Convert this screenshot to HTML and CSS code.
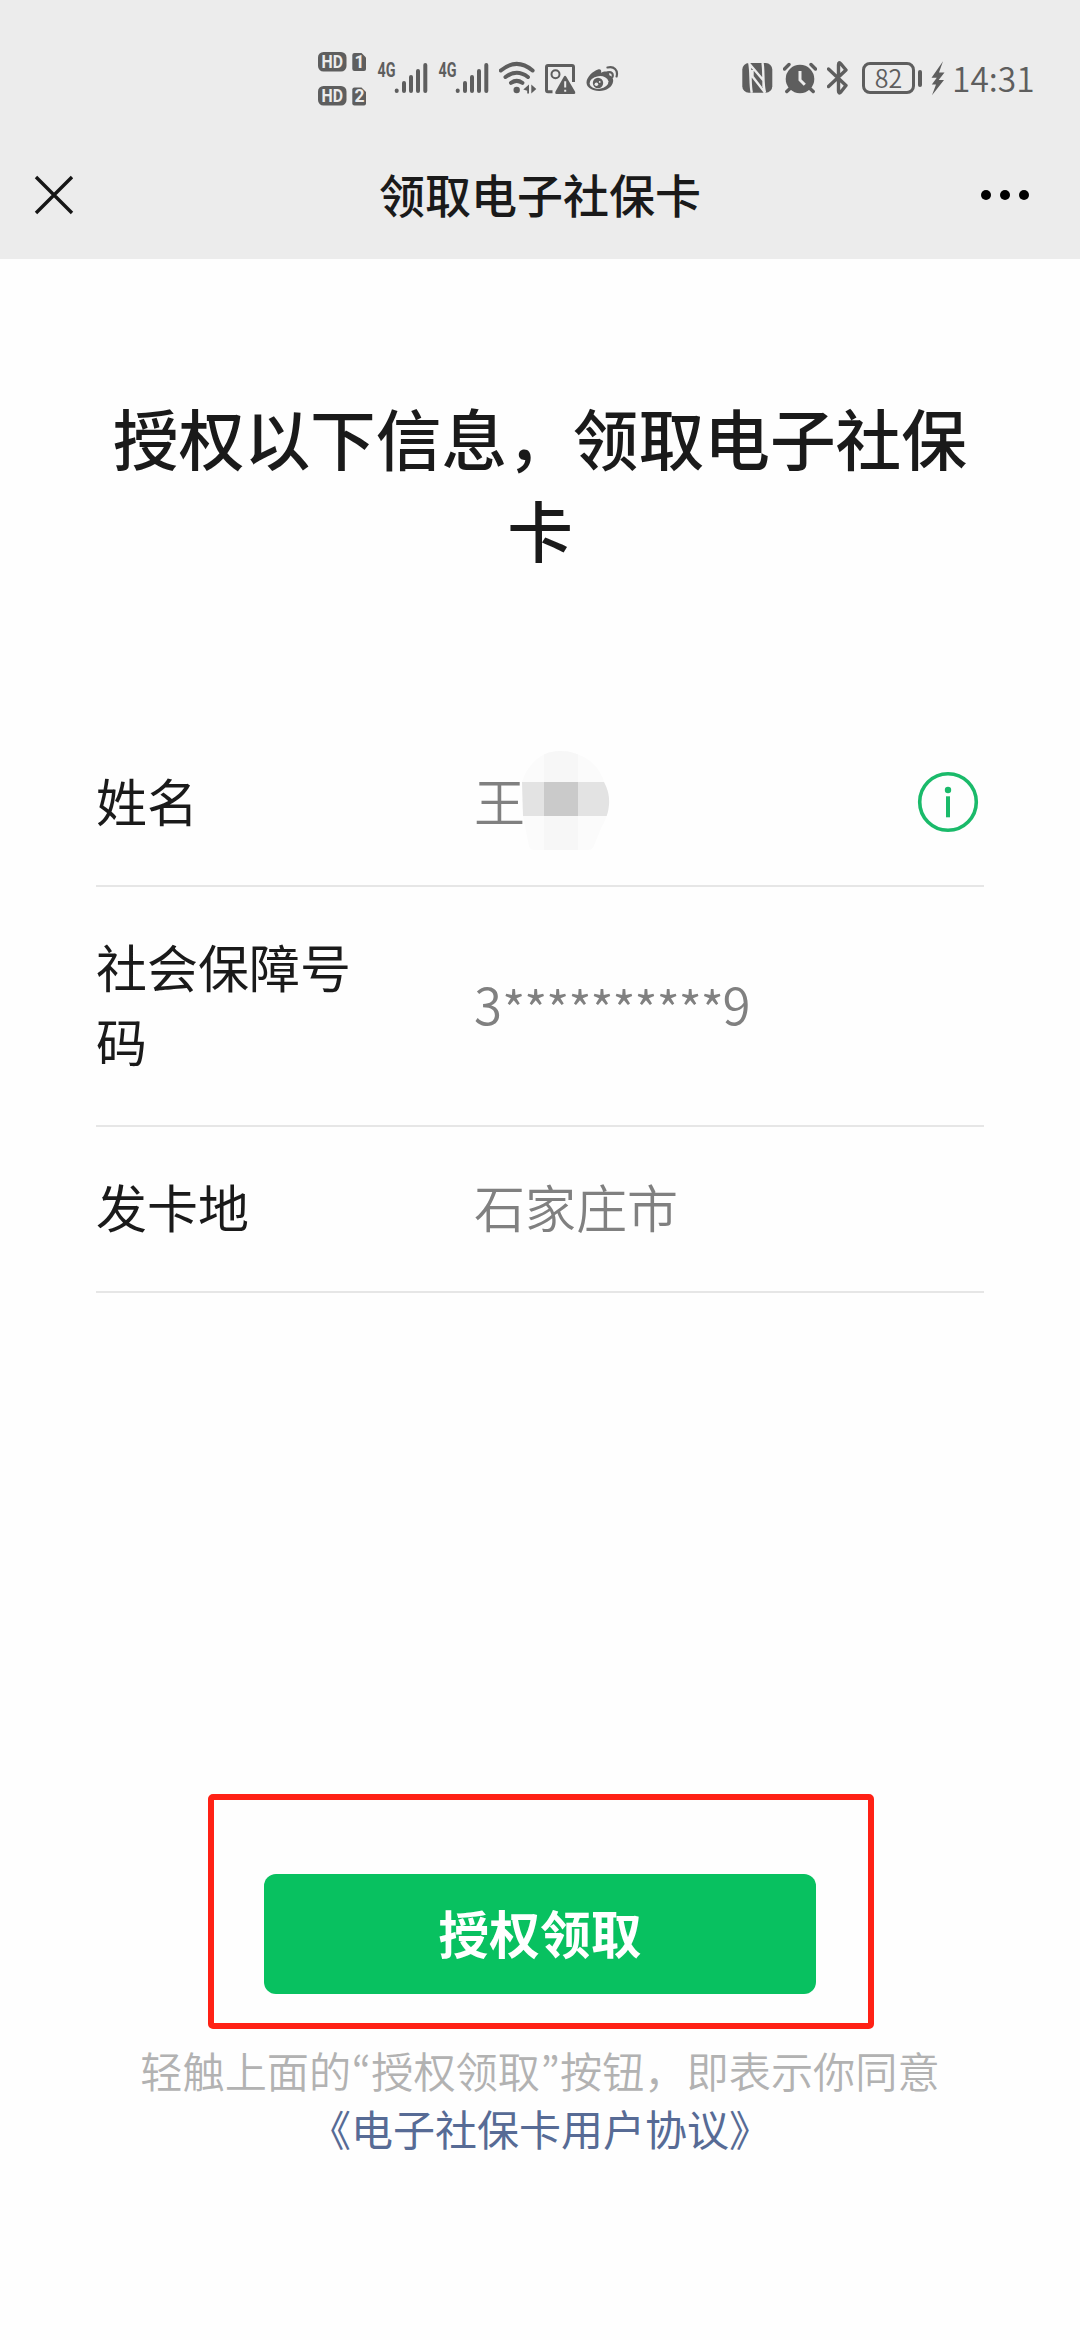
FILE: index.html
```
<!doctype html>
<html lang="zh-CN">
<head>
  <meta charset="UTF-8">
  <meta name="viewport" content="width=device-width, initial-scale=1.0">
  <title>领取电子社保卡</title>
  <link rel="stylesheet" href="styles.css">
</head>
<body>
  <div id="app">
    <div class="top">
      <div class="status">
        <div class="status-left">
          <svg class="icon hd" width="48" height="60" viewBox="0 0 48 60">
            <rect x="0" y="4" width="28.5" height="19.5" rx="5.5"/>
            <rect x="0" y="38" width="28.5" height="19.5" rx="5.5"/>
            <path d="M36.500 5H43.500L48 9.500V21Q48 23 46 23H36.500Q34.300 23 34.300 21V7Q34.300 5 36.500 5Z"/>
            <path d="M36.500 39.500H43.500L48 44V55.500Q48 57.500 46 57.500H36.500Q34.300 57.500 34.300 55.500V41.500Q34.300 39.500 36.500 39.500Z"/>
            <text class="hd-text" x="3.5" y="19.8" textLength="21.500" lengthAdjust="spacingAndGlyphs">HD</text>
            <text class="hd-text" x="3.5" y="53.800" textLength="21.500" lengthAdjust="spacingAndGlyphs">HD</text>
            <text class="hd-text" x="36.500" y="19.8">1</text>
            <text class="hd-text" x="36.500" y="54.300">2</text>
          </svg>
          <svg class="icon signal" width="51" height="60" viewBox="0 0 51 60">
            <text class="net-text" x="0.500" y="28.500" textLength="18" lengthAdjust="spacingAndGlyphs">4G</text>
            <path class="bar" d="M19.700 42.500V43M27 35V43M34 29V43M41 23V43M48.300 17V43"/>
          </svg>
          <svg class="icon signal" width="51" height="60" viewBox="0 0 51 60">
            <text class="net-text" x="0.500" y="28.500" textLength="18" lengthAdjust="spacingAndGlyphs">4G</text>
            <path class="bar" d="M19.700 42.500V43M27 35V43M34 29V43M41 23V43M48.300 17V43"/>
          </svg>
          <svg class="icon wifi" width="38" height="60" viewBox="0 0 38 60">
            <path class="arc" d="M1.800 22.500Q17.700 9.300 33.600 22.500M6.500 29Q17.700 20.600 28.900 29M12 34.800Q17.700 31 23.400 34.800"/>
            <circle cx="17.700" cy="42" r="3.200"/>
            <path d="M30 36.500V45.500H28.200V42.800L24.300 41.600ZM32.300 36.500L37.300 41L32.300 45.500Z"/>
          </svg>
          <svg class="icon image" width="31" height="60" viewBox="0 0 31 60">
            <path class="line" d="M7.500 43.700H3Q1.500 43.700 1.500 42.200V19Q1.500 17.500 3 17.500H27Q28.500 17.500 28.500 19V34"/>
            <circle class="ring" cx="10.500" cy="26.300" r="4"/>
            <path d="M18.800 28.800Q20 26.500 21.300 28.800L30 43.500Q30.800 46 29 46H11.500Q9.700 46 10.500 43.500Z"/>
            <path class="mark" d="M20.200 33.300V39.500M20.200 41.700V43.700"/>
          </svg>
          <svg class="icon weibo" width="33" height="60" viewBox="0 0 33 60">
            <path d="M12 21.500C14.500 20.700 15.800 22.300 15 24.800C18.500 23 23.500 22.500 23.400 27.200C25.500 28 27.500 29.800 27.200 33C26.500 39.500 19.500 43.300 13 43C6 42.700 0.500 39.500 0.500 34.500C0.500 29.500 7 22.800 12 21.500Z"/>
            <ellipse class="hole" cx="13" cy="34.500" rx="9.500" ry="6.300" transform="rotate(-8 13 34.500)"/>
            <circle cx="12" cy="35" r="5.200"/>
            <circle class="hole" cx="10.400" cy="36.300" r="1.800"/>
            <circle class="hole" cx="13.700" cy="33.900" r="0.900"/>
            <path class="wave" d="M21.500 24.300C25.500 23.300 27.500 25.500 26.500 29M21.500 19.500C28 17.800 32.300 22 30.600 28.500"/>
          </svg>
        </div>
        <div class="status-right">
          <svg class="icon nfc" width="31" height="60" viewBox="0 0 31 60">
            <rect x="0.300" y="15" width="30" height="29.700" rx="6.500"/>
            <path class="nfc-line" d="M9.800 44.700C8 38 9 24 7.500 16L21.500 32.500V39M20.500 15C22 22 20.500 36 23 44.700L10.500 28.500V22"/>
          </svg>
          <svg class="icon alarm" width="34" height="60" viewBox="0 0 34 60">
            <circle cx="17" cy="31" r="14.300"/>
            <path class="leg" d="M1.500 21L6 16.500M28 16.500L32.500 21M7 40.500L3.800 43.500M27 40.500L30.200 43.500"/>
            <path class="hands" d="M17 23V32L21.800 36.800"/>
          </svg>
          <svg class="icon bluetooth" width="22" height="60" viewBox="0 0 22 60">
            <path class="line" d="M1.500 21L19 37.500L14 43.800Q11.500 46.500 11.500 43V17Q11.500 13 14 16L19 22L1.500 38.500"/>
          </svg>
          <div class="battery">
            <div class="battery-body">82</div>
            <div class="battery-cap"></div>
          </div>
          <svg class="icon bolt" width="14" height="60" viewBox="0 0 14 60">
            <path d="M12 13.300L0.500 29.700H5.800L0.800 36.500H5L1 47.300L13 32H7.700L13.500 24.500H8Z"/>
          </svg>
          <span class="time">14:31</span>
        </div>
      </div>
      <div class="nav">
        <svg class="close" width="40" height="40" viewBox="0 0 40 40">
          <path d="M2 2L38 38M38 2L2 38"/>
        </svg>
        <div class="nav-title">领取电子社保卡</div>
        <svg class="more" width="50" height="12" viewBox="0 0 50 12">
          <circle cx="6" cy="6" r="5"/>
          <circle cx="25" cy="6" r="5"/>
          <circle cx="44" cy="6" r="5"/>
        </svg>
      </div>
    </div>

    <h1 class="title">授权以下信息，领取电子社保卡</h1>

    <div class="list">
      <div class="row">
        <div class="label">姓名</div>
        <div class="value name">王<svg class="mosaic" width="88" height="100" viewBox="0 0 88 100">
            <clipPath id="blob">
              <path d="M0 31C5 15 18 0 38 0C58 0 77 12 82 31Q88 42 87 54Q86 66 79 77L72 95Q70 99 66 99H12Q8 99 7 95L1 65Z"/>
            </clipPath>
            <g clip-path="url(#blob)">
              <rect width="88" height="100" fill="#fbfbfb"/>
              <rect x="22" width="34" height="100" fill="#f7f7f7"/>
              <rect y="31" width="88" height="34" fill="#e3e3e3"/>
              <rect x="22" y="31" width="34" height="34" fill="#cacaca"/>
            </g>
          </svg></div>
        <svg class="info" width="62" height="62" viewBox="0 0 62 62">
          <circle class="info-ring" cx="31" cy="31" r="28.300"/>
          <circle cx="31" cy="19" r="3.200"/>
          <rect x="29" y="25.300" width="4" height="21"/>
        </svg>
      </div>
      <div class="row">
        <div class="label">社会保障号码</div>
        <div class="value">3<span class="stars">**********</span>9</div>
      </div>
      <div class="row">
        <div class="label">发卡地</div>
        <div class="value">石家庄市</div>
      </div>
    </div>

    <div class="highlight">
      <div class="btn">授权领取</div>
    </div>

    <div class="tips">
      轻触上面的<span class="quote">“</span>授权领取<span class="quote">”</span>按钮，即表示你同意
      <div class="link">《电子社保卡用户协议》</div>
    </div>
  </div>
</body>
</html>
```
FILE: styles.css
```
* {
    box-sizing: border-box;
}

body {
    margin: 0;
    background: #fefefe;
    font-family: "Noto Sans CJK SC", sans-serif;
    color: #1a1a1a;
}

#app {
    width: 1080px;
    height: 2340px;
    overflow: hidden;
}

.top {
    height: 259px;
    background: #ececec;
}

.status {
    display: flex;
    justify-content: space-between;
    height: 130px;
    padding: 48px 44px 0 318px;
    color: #5e5e5e;
}

.status-left,
.status-right {
    display: flex;
    height: 60px;
}

.icon {
    flex: none;
    fill: #5e5e5e;
}

.hd {
    margin-right: 11px;
}

.hd-text {
    font: bold 17.5px Roboto, sans-serif;
    fill: #ececec;
}

.net-text {
    font: bold 19.5px Roboto, sans-serif;
}

.signal {
    margin-right: 10px;
}

.bar,
.arc,
.line,
.ring,
.wave,
.leg {
    fill: none;
    stroke: #5e5e5e;
    stroke-width: 4;
    stroke-linecap: round;
    stroke-linejoin: round;
}

.wifi {
    margin-right: 8px;
}

.image {
    margin-right: 10px;
}

.image .line {
    stroke-width: 3;
    stroke-linecap: butt;
}

.ring {
    stroke-width: 2;
}

.mark {
    fill: none;
    stroke: #ececec;
    stroke-width: 2;
}

.wave {
    stroke-width: 2.2;
}

.hole {
    fill: #ececec;
}

.nfc {
    margin-right: 10px;
}

.nfc-line {
    fill: none;
    stroke: #ececec;
    stroke-width: 2.4;
}

.alarm {
    margin-right: 10px;
}

.leg {
    stroke-width: 3.4;
}

.hands {
    fill: none;
    stroke: #ececec;
    stroke-width: 3;
}

.bluetooth {
    margin-right: 13px;
}

.bluetooth .line {
    stroke-width: 3.4;
}

.battery {
    display: flex;
    align-items: center;
    gap: 3px;
    margin-right: 9px;
}

.battery-body {
    width: 53px;
    height: 32px;
    border: 3px solid #5e5e5e;
    border-radius: 8px;
    font-size: 25px;
    font-weight: 350;
    line-height: 24px;
    text-align: center;
}

.battery-cap {
    width: 4px;
    height: 17px;
    border-radius: 2px;
    background: #5e5e5e;
}

.time {
    width: 84px;
    margin-left: 7px;
    font-size: 33.5px;
    font-weight: 350;
    line-height: 60px;
    white-space: nowrap;
}

.nav {
    display: grid;
    grid-template-columns: 1fr auto 1fr;
    align-items: center;
    height: 129px;
    padding: 0 50px 0 34px;
}

.close {
    stroke: #161616;
    stroke-width: 3.4;
}

.nav-title {
    padding: 0 0 3px 16px;
    font-size: 46px;
    font-weight: 500;
}

.more {
    justify-self: end;
    fill: #000;
}

.title {
    margin: 132px 96px 0;
    font-size: 65.7px;
    font-weight: 500;
    line-height: 92px;
    text-align: center;
}

.list {
    margin: 146px 96px 0;
    font-size: 51px;
    line-height: 74px;
}

.row {
    display: flex;
    align-items: center;
    padding: 42px 0 48px;
    border-bottom: 2px solid #e6e6e6;
}

.row:first-child {
    padding-top: 42px;
}

.label {
    width: 258px;
    margin-right: 120px;
}

.value {
    flex: 1;
    color: #808080;
    font-weight: 350;
}

.name {
    display: flex;
    align-items: center;
    height: 74px;
}

.mosaic {
    margin: 2px 0 0 -3px;
}

.stars {
    letter-spacing: -1.4px;
    vertical-align: -4px;
    line-height: 1;
}

.info {
    margin: 4px 5px 0 0;
    fill: #1aba6a;
}

.info-ring {
    fill: none;
    stroke: #1aba6a;
    stroke-width: 3.6;
}

.highlight {
    width: 666px;
    height: 235px;
    margin: 501px 0 0 208px;
    padding: 74px 52px 0 50px;
    border: 6px solid #ff2115;
    border-radius: 5px;
}

.btn {
    height: 120px;
    border-radius: 12px;
    background: #08c160;
    color: #fff;
    font-size: 50.7px;
    font-weight: 700;
    line-height: 116px;
    text-align: center;
}

.tips {
    margin-top: 12px;
    color: #b2b2b2;
    font-size: 42.2px;
    font-weight: 350;
    line-height: 58px;
    text-align: center;
}

.quote {
    display: inline-block;
    width: 20px;
    font-family: "Noto Sans CJK KR", sans-serif;
}

.link {
    color: #576b95;
    font-size: 42px;
    font-weight: 400;
}
```
